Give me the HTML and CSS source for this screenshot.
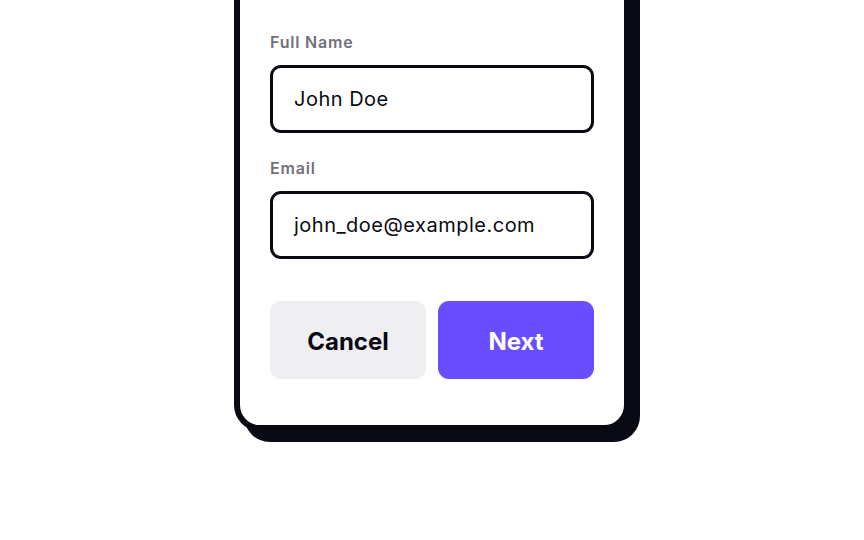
FILE: index.html
```html
<!DOCTYPE html>
<html lang="en">
<head>
<meta charset="utf-8">
<title>Form</title>
<link rel="stylesheet" href="styles.css">
</head>
<body>
<main class="stage">
  <section class="card">
    <form class="form">
      <div class="field">
        <label class="label" for="name">Full Name</label>
        <div class="input" id="name">John Doe</div>
      </div>
      <div class="field">
        <label class="label" for="email">Email</label>
        <div class="input" id="email">john_doe@example.com</div>
      </div>
      <div class="actions">
        <button type="button" class="btn btn-cancel">Cancel</button>
        <button type="button" class="btn btn-next">Next</button>
      </div>
    </form>
  </section>
</main>
</body>
</html>
```

FILE: styles.css
```css
* { box-sizing: border-box; }
html, body {
  margin: 0;
  padding: 0;
  background: #ffffff;
  font-family: Inter, "Noto Sans", sans-serif;
  overflow: hidden;
}
.stage {
  width: 864px;
  height: 540px;
  display: flex;
  justify-content: center;
  align-items: flex-start;
}
.card {
  width: 396px;
  margin-top: -60px;
  background: #ffffff;
  border: 6px solid #0a0a14;
  border-radius: 26px;
  box-shadow: 10px 11px 0 #0a0a14;
  padding: 86px 30px 46px;
}
.form {
  display: flex;
  flex-direction: column;
}
.field {
  display: flex;
  flex-direction: column;
  gap: 13px;
  margin-bottom: 25px;
}
.label {
  font-size: 16px;
  line-height: 20px;
  font-weight: 600;
  letter-spacing: 0.8px;
  color: #71717a;
}
.input {
  height: 68px;
  border: 3px solid #0a0a14;
  border-radius: 11px;
  padding: 0 21px;
  display: flex;
  align-items: center;
  font-size: 20px;
  letter-spacing: 0.5px;
  color: #0a0a14;
}
.actions {
  display: flex;
  gap: 12px;
  margin-top: 17px;
}
.btn {
  flex: 1 1 0;
  height: 78px;
  border: 0;
  border-radius: 11px;
  font-family: Inter, "Noto Sans", sans-serif;
  font-size: 24px;
  font-weight: 700;
  padding: 2px 0 0;
}
.btn-cancel {
  background: #efeff1;
  color: #0a0a14;
}
.btn-next {
  background: #6a4dff;
  color: #ffffff;
}
```
